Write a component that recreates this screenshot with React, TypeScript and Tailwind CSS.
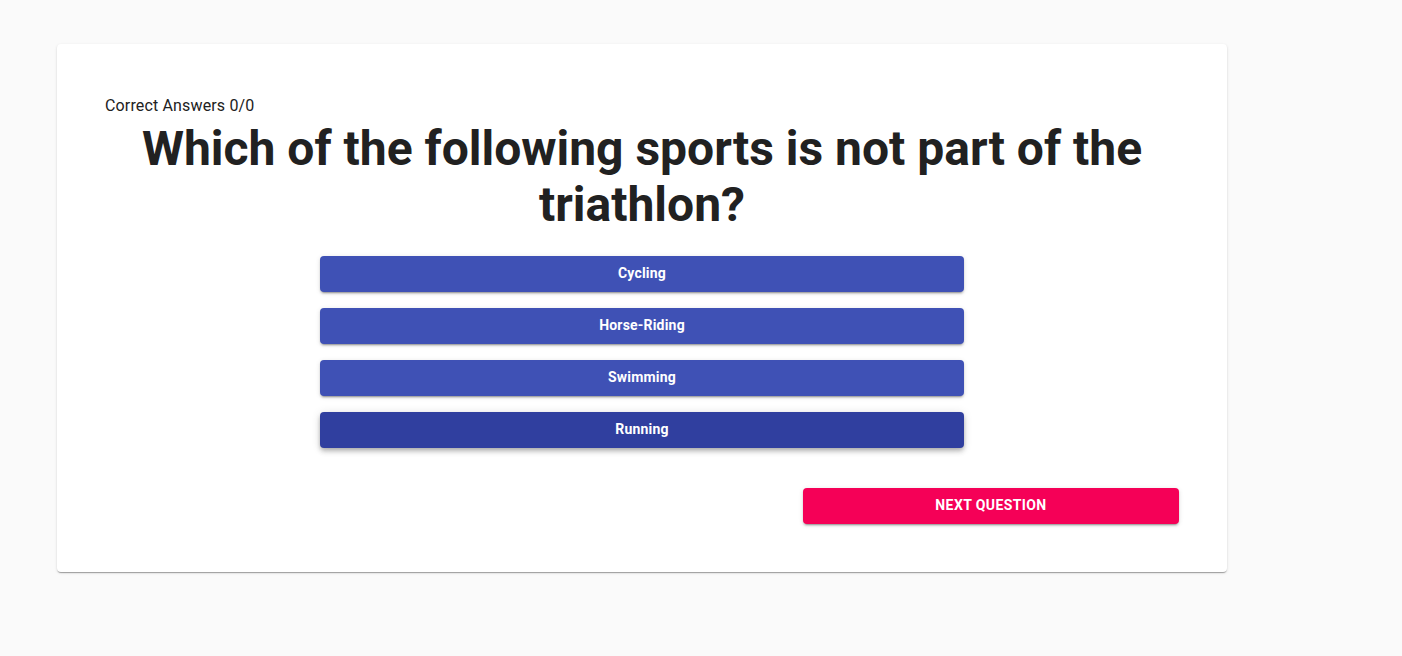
import React from "react";

export default function App() {
  const answers = ["Cycling", "Horse-Riding", "Swimming", "Running"];
  return (
    <div className="min-h-[656px] w-full bg-[#fafafa] pt-[44px] pl-[57px]" style={{ fontFamily: "Roboto, 'Liberation Sans', sans-serif" }}>
      <div className="w-[1170px] rounded bg-white px-[48px] pt-[50px] pb-[48px] shadow-[0px_2px_1px_-1px_rgba(0,0,0,0.2),0px_1px_1px_0px_rgba(0,0,0,0.14),0px_1px_3px_0px_rgba(0,0,0,0.12)]">
        <div className="text-[16px] leading-[24px] tracking-[0.15px] text-[#212121]">Correct Answers 0/0</div>
        <h1 className="mt-[3px] text-center text-[48px] font-bold leading-[56px] text-[#212121]">
          Which of the following sports is not part of the triathlon?
        </h1>
        <div className="mx-auto mt-[23px] flex w-[644px] flex-col gap-[16px]">
          {answers.map((a, i) => (
            <button
              key={a}
              className={
                "h-[36px] w-full rounded pb-[1px] text-[14px] font-bold tracking-[0.2px] text-white " +
                (i === 3
                  ? "bg-[#303f9f] shadow-[0px_2px_4px_-1px_rgba(0,0,0,0.2),0px_4px_5px_0px_rgba(0,0,0,0.14),0px_1px_10px_0px_rgba(0,0,0,0.12)]"
                  : "bg-[#3f51b5] shadow-[0px_3px_1px_-2px_rgba(0,0,0,0.2),0px_2px_2px_0px_rgba(0,0,0,0.14),0px_1px_5px_0px_rgba(0,0,0,0.12)]")
              }
            >
              {a}
            </button>
          ))}
        </div>
        <div className="mt-[40px] flex justify-end">
          <button className="h-[36px] w-[376px] rounded pb-[1px] bg-[#f50057] text-[14px] font-bold uppercase tracking-[0.4px] text-white shadow-[0px_3px_1px_-2px_rgba(0,0,0,0.2),0px_2px_2px_0px_rgba(0,0,0,0.14),0px_1px_5px_0px_rgba(0,0,0,0.12)]">
            Next Question
          </button>
        </div>
      </div>
    </div>
  );
}
